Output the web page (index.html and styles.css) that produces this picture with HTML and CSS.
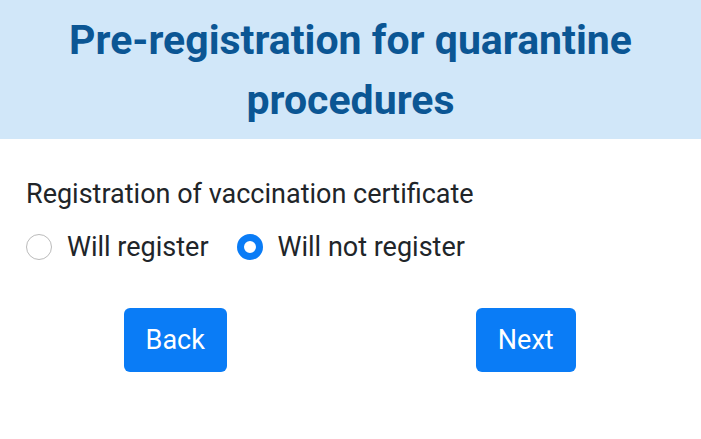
FILE: index.html
```html
<!DOCTYPE html>
<html lang="en">
<head>
<meta charset="utf-8">
<title>Pre-registration</title>
<link rel="stylesheet" href="styles.css">
</head>
<body>
<header class="header">
  <h1 class="title">Pre-registration for quarantine procedures</h1>
</header>
<main class="content">
  <p class="label">Registration of vaccination certificate</p>
  <div class="radios">
    <label class="radio"><span class="dot"></span>Will register</label>
    <label class="radio"><span class="dot checked"></span>Will not register</label>
  </div>
  <div class="actions">
    <div class="col"><button class="btn">Back</button></div>
    <div class="col"><button class="btn">Next</button></div>
  </div>
</main>
</body>
</html>
```

FILE: styles.css
```css
* { box-sizing: border-box; }
html, body { margin: 0; padding: 0; background: #fff; }
body { font-family: Roboto, "Liberation Sans", sans-serif; color: #212529; width: 701px; height: 439px; overflow: hidden; }
.header {
  background: #d1e7f9;
  height: 139px;
  display: flex;
  align-items: center;
  justify-content: center;
  padding: 0 30px;
}
.title {
  margin: 0;
  text-align: center;
  font-size: 41px;
  line-height: 60px;
  font-weight: 700;
  color: #0b5694;
}
.content { padding: 37px 26px 0; }
.label { margin: 0; font-size: 27px; line-height: 36px; }
.radios { display: flex; gap: 28px; margin-top: 17px; }
.radio { display: flex; align-items: center; font-size: 27px; line-height: 36px; }
.dot {
  width: 26px; height: 26px; border-radius: 50%;
  border: 1.5px solid #bbb; margin-right: 15px; background: #fff;
}
.dot.checked { border: 7px solid #0a7cf6; }
.actions { display: flex; margin: 43px -26px 0; }
.col { flex: 1; display: flex; justify-content: center; }
.btn {
  font-family: inherit; font-size: 27px; color: #fff;
  background: #0a7cf6; border: none; border-radius: 6px;
  height: 64px; padding: 0 22px;
}
```
